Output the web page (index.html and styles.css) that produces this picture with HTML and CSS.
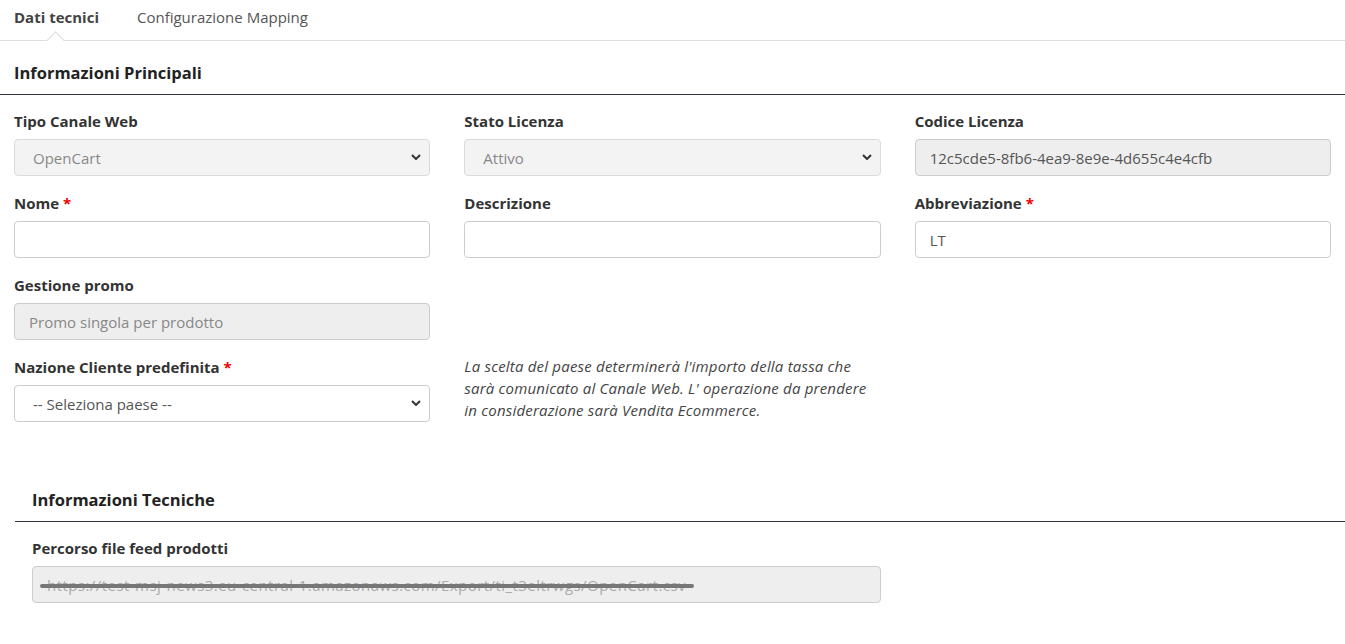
FILE: index.html
```html
<!DOCTYPE html>
<html>
  <head>
    <meta charset="UTF-8" />
    <meta name="viewport" content="width=device-width, initial-scale=1.0" />
    <title>Canale Web - Dati tecnici</title>
    <link rel="stylesheet" href="styles.css">
  </head>

  <body>
    <nav class="tabs">
      <a class="tab active" href="#">Dati tecnici</a>
      <a class="tab" href="#">Configurazione Mapping</a>
    </nav>

    <section class="panel">
      <h2 class="panel-title">Informazioni Principali</h2>

      <div class="form-grid">
        <div class="field">
          <label>Tipo Canale Web</label>
          <div class="select-wrap">
            <select class="control" disabled>
              <option>OpenCart</option>
            </select>
            <svg class="chevron" width="10" height="6" viewBox="0 0 10 6"><path d="M1 1l4 4 4-4" fill="none" stroke="#333" stroke-width="2"/></svg>
          </div>
        </div>
        <div class="field">
          <label>Stato Licenza</label>
          <div class="select-wrap">
            <select class="control" disabled>
              <option>Attivo</option>
            </select>
            <svg class="chevron" width="10" height="6" viewBox="0 0 10 6"><path d="M1 1l4 4 4-4" fill="none" stroke="#333" stroke-width="2"/></svg>
          </div>
        </div>
        <div class="field">
          <label>Codice Licenza</label>
          <input class="control" type="text" value="12c5cde5-8fb6-4ea9-8e9e-4d655c4e4cfb" disabled>
        </div>

        <div class="field">
          <label>Nome <span class="req">*</span></label>
          <input class="control" type="text">
        </div>
        <div class="field">
          <label>Descrizione</label>
          <input class="control" type="text">
        </div>
        <div class="field">
          <label>Abbreviazione <span class="req">*</span></label>
          <input class="control" type="text" value="LT">
        </div>

        <div class="field">
          <label>Gestione promo</label>
          <input class="control placeholder" type="text" value="Promo singola per prodotto" disabled>
        </div>
        <div></div>
        <div></div>

        <div class="field">
          <label>Nazione Cliente predefinita <span class="req">*</span></label>
          <div class="select-wrap">
            <select class="control">
              <option>-- Seleziona paese --</option>
            </select>
            <svg class="chevron" width="10" height="6" viewBox="0 0 10 6"><path d="M1 1l4 4 4-4" fill="none" stroke="#333" stroke-width="2"/></svg>
          </div>
        </div>
        <p class="help">La scelta del paese determinerà l'importo della tassa che sarà comunicato al Canale Web. L' operazione da prendere in considerazione sarà Vendita Ecommerce.</p>
      </div>
    </section>

    <section class="panel sub">
      <h2 class="panel-title">Informazioni Tecniche</h2>
      <div class="field wide">
        <label>Percorso file feed prodotti</label>
        <div class="control readonly">
          <span class="redacted">https://test-msj-news3.eu-central-1.amazonaws.com/Export/ti_t3eltrwgs/OpenCart.csv</span>
        </div>
      </div>
    </section>
  </body>
</html>
```

FILE: styles.css
```css
html,
body {
  margin: 0;
  background: #fff;
  font-family: "Open Sans", sans-serif;
  font-size: 15px;
  color: #333;
}

/* Tabs */
.tabs {
  display: flex;
  gap: 38px;
  height: 40px;
  padding-left: 14px;
  border-bottom: 1px solid #ddd;
}

.tab {
  position: relative;
  padding-top: 7px;
  line-height: 20px;
  color: #555;
  text-decoration: none;
}

.tab.active {
  font-weight: 700;
  color: #444;
}

.tab.active::after {
  content: "";
  position: absolute;
  left: 50%;
  bottom: -7px;
  width: 12px;
  height: 12px;
  margin-left: -7px;
  background: #fff;
  border-top: 1px solid #ddd;
  border-left: 1px solid #ddd;
  transform: rotate(45deg);
}

/* Panels */
.panel {
  padding: 0 14px;
}

.panel-title {
  margin: 21px -14px 16px 0;
  padding: 0 0 10px 0;
  font-size: 16.5px;
  line-height: 22px;
  font-weight: 700;
  color: #222;
  border-bottom: 1px solid #2f353b;
}

.panel:first-of-type .panel-title {
  margin-left: -14px;
  padding-left: 14px;
}

.panel.sub {
  padding-left: 15px;
  padding-right: 0;
}

.panel.sub .panel-title {
  margin: 50px 0 16px 0;
  padding-left: 17px;
}

.form-grid {
  display: grid;
  grid-template-columns: repeat(3, 1fr);
  column-gap: 34px;
}

.field {
  margin-bottom: 17px;
}

.field.wide {
  width: 849px;
  margin-left: 17px;
}

label {
  display: block;
  margin-bottom: 8px;
  line-height: 20px;
  font-weight: 700;
  color: #333;
}

.req {
  color: #e00;
}

.control {
  display: block;
  width: 100%;
  height: 37px;
  box-sizing: border-box;
  padding: 0 14px;
  border: 1px solid #ccc;
  border-radius: 4px;
  background: #fff;
  font-family: "Open Sans", sans-serif;
  font-size: 15px;
  color: #555;
  outline: none;
}

.control:disabled,
.control.readonly {
  background: #eee;
  color: #555;
}

.control.placeholder {
  color: #888;
}

.select-wrap {
  position: relative;
}

select.control {
  appearance: none;
  -webkit-appearance: none;
  padding-left: 18px;
}

.chevron {
  position: absolute;
  right: 9px;
  top: 15px;
  pointer-events: none;
}

.help {
  margin: -2px 0 0 0;
  line-height: 22px;
  font-style: italic;
  letter-spacing: 0.2px;
  color: #444;
}

.control.readonly {
  display: flex;
  align-items: center;
  color: #aaa;
  white-space: nowrap;
  overflow: hidden;
}

.redacted {
  position: relative;
  letter-spacing: 0.45px;
}

.redacted::after {
  content: "";
  position: absolute;
  left: -7px;
  right: -8px;
  top: 50%;
  height: 4px;
  margin-top: -1px;
  border-radius: 2px;
  background: #777;
}
```
